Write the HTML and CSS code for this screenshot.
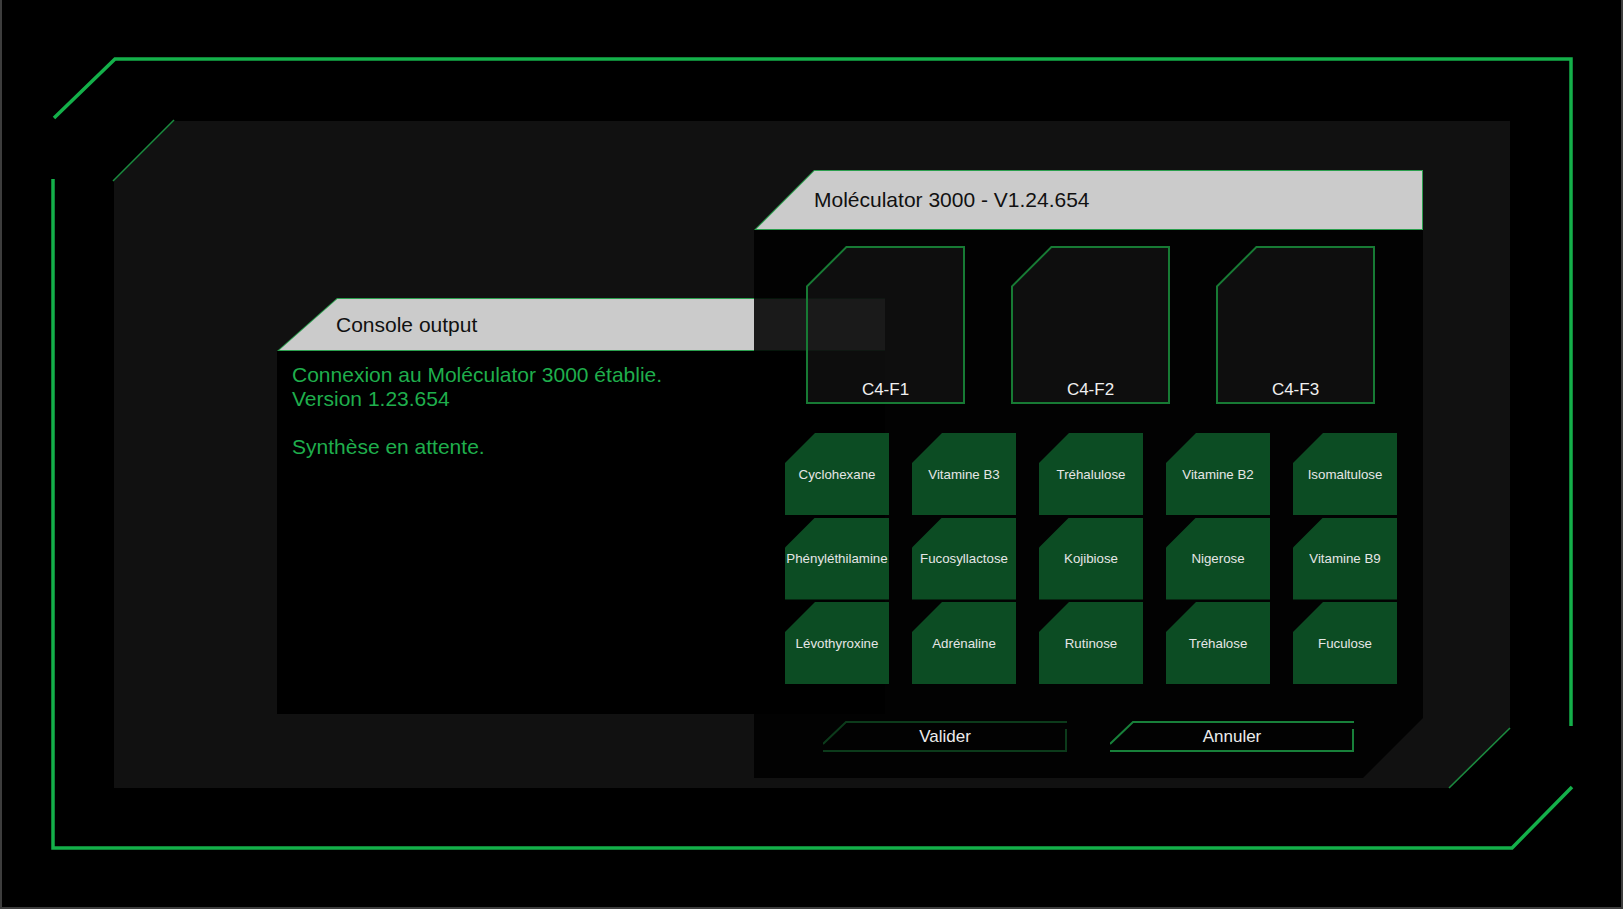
FILE: index.html
```html
<!DOCTYPE html>
<html lang="fr">
<head>
    <meta charset="UTF-8">
    <meta name="viewport" content="width=device-width, initial-scale=1.0">
    <title>Moléculator 3000</title>
    <link rel="stylesheet" href="styles.css">
</head>
<body>
    <div class="screen">
        <main class="panel">
            <section class="console">
                <div class="console-head">
                    <div class="console-head-fill">Console output</div>
                </div>
                <div class="console-body">
                    <p>Connexion au Moléculator 3000 établie.<br>Version 1.23.654</p>
                    <p>Synthèse en attente.</p>
                </div>
            </section>

            <section class="synth">
                <div class="synth-head">
                    <div class="synth-head-fill">Moléculator 3000 - V1.24.654</div>
                </div>
                <div class="synth-body">
                    <div class="flasks">
                        <div class="flask"><div class="flask-fill">C4-F1</div></div>
                        <div class="flask"><div class="flask-fill">C4-F2</div></div>
                        <div class="flask"><div class="flask-fill">C4-F3</div></div>
                    </div>

                    <div class="molecules">
                        <div class="tile">Cyclohexane</div>
                        <div class="tile">Vitamine B3</div>
                        <div class="tile">Tréhalulose</div>
                        <div class="tile">Vitamine B2</div>
                        <div class="tile">Isomaltulose</div>
                        <div class="tile">Phényléthilamine</div>
                        <div class="tile">Fucosyllactose</div>
                        <div class="tile">Kojibiose</div>
                        <div class="tile">Nigerose</div>
                        <div class="tile">Vitamine B9</div>
                        <div class="tile">Lévothyroxine</div>
                        <div class="tile">Adrénaline</div>
                        <div class="tile">Rutinose</div>
                        <div class="tile">Tréhalose</div>
                        <div class="tile">Fuculose</div>
                    </div>

                    <div class="actions">
                        <button class="btn btn-dim">
                            <svg class="btn-outline" width="244" height="31" viewBox="0 0 244 31">
                                <path d="M0 23 L23 1 L244 1 M243 8 L243 31 M0 30 L244 30"/>
                            </svg>
                            <span>Valider</span>
                        </button>
                        <button class="btn">
                            <svg class="btn-outline" width="244" height="31" viewBox="0 0 244 31">
                                <path d="M0 23 L23 1 L244 1 M243 8 L243 31 M0 30 L244 30"/>
                            </svg>
                            <span>Annuler</span>
                        </button>
                    </div>
                </div>
            </section>
        </main>

        <!-- decorative frame lines drawn over the page -->
        <svg class="frame" width="1623" height="909" viewBox="0 0 1623 909">
            <polyline class="frame-line" points="54,118 115,59 1571,59 1571,726"/>
            <polyline class="frame-line" points="53,179 53,848 1512,848 1572,787"/>
            <line class="panel-edge" x1="113" y1="181" x2="174" y2="120"/>
            <line class="panel-edge" x1="1510" y1="728" x2="1449" y2="788"/>
        </svg>
    </div>
</body>
</html>
```

FILE: styles.css
```css
html, body {
    margin: 0;
    padding: 0;
    background-color: #000;
}

body {
    font-family: "Liberation Sans", Arial, sans-serif;
}

.screen {
    position: relative;
    width: 1623px;
    height: 909px;
    box-sizing: border-box;
    padding: 121px 0 0 114px;
    background-color: #000;
    box-shadow: inset 2px 0 #3d3d3d, inset -2px 0 #3d3d3d, inset 0 -2px #3d3d3d;
    overflow: hidden;
}

.frame {
    position: absolute;
    top: 0;
    left: 0;
    pointer-events: none;
}

.frame-line {
    fill: none;
    stroke: #14b04a;
    stroke-width: 3.5;
}

.panel-edge {
    stroke: #1b8a3f;
    stroke-width: 1.6;
}

/* inner dark panel */
.panel {
    display: flex;
    align-items: flex-start;
    width: 1396px;
    height: 667px;
    box-sizing: border-box;
    padding: 49px 0 0 163px;
    background-color: #111;
    clip-path: polygon(60px 0, 100% 0, 100% calc(100% - 60px), calc(100% - 61px) 100%, 0 100%, 0 60px);
}

/* console */
.console {
    width: 608px;
    margin-top: 128px;
    flex-shrink: 0;
}

.console-head {
    height: 53px;
    box-sizing: border-box;
    padding: 1px 0;
    background-color: #2b9f4e;
    clip-path: polygon(60px 0, 100% 0, 100% 100%, 0 100%);
}

.console-head-fill {
    height: 51px;
    line-height: 51px;
    padding-left: 59px;
    background-color: #cbcbcb;
    color: #111;
    font-size: 21px;
    clip-path: polygon(60.3px 0, 100% 0, 100% 100%, 2.5px 100%);
}

.console-body {
    height: 363px;
    box-sizing: border-box;
    padding: 12px 0 0 15px;
    background-color: #000;
    color: #1fae4c;
    font-size: 21px;
    line-height: 24px;
}

.console-body p {
    margin: 0 0 24px;
}

/* molecule synthesizer */
.synth {
    width: 669px;
    margin-left: -131px;
    flex-shrink: 0;
}

.synth-head {
    height: 60px;
    box-sizing: border-box;
    padding: 1px;
    background-color: #2b9f4e;
    clip-path: polygon(60px 0, 100% 0, 100% 100%, 0 100%);
}

.synth-head-fill {
    height: 58px;
    line-height: 58px;
    padding-left: 59px;
    background-color: #cbcbcb;
    color: #111;
    font-size: 21px;
    clip-path: polygon(59.4px 0, 100% 0, 100% 100%, 1.4px 100%);
}

.synth-body {
    height: 548px;
    box-sizing: border-box;
    padding-top: 16px;
    background-color: rgba(0, 0, 0, 0.87);
    clip-path: polygon(0 0, 100% 0, 100% calc(100% - 60px), calc(100% - 60px) 100%, 0 100%);
}

.flasks {
    display: flex;
    gap: 46px;
    margin-left: 52px;
}

.flask {
    position: relative;
    width: 159px;
    height: 158px;
}

/* green outline of the flask shape, drawn over the see-through fill */
.flask::after {
    content: "";
    position: absolute;
    inset: 0;
    background-color: #177a34;
    clip-path: polygon(40px 0, 100% 0, 100% 100%, 0 100%, 0 40px,
        2px 40.8px, 2px calc(100% - 2px), calc(100% - 2px) calc(100% - 2px),
        calc(100% - 2px) 2px, 40.8px 2px, 2px 40.8px, 0 40px);
}

.flask-fill {
    display: flex;
    align-items: flex-end;
    justify-content: center;
    height: 100%;
    box-sizing: border-box;
    padding-bottom: 4px;
    background-color: rgba(26, 26, 26, 0.5);
    color: #f0f0f0;
    font-size: 17px;
    clip-path: polygon(40px 0, 100% 0, 100% 100%, 0 100%, 0 40px);
}

.molecules {
    display: grid;
    grid-template-columns: repeat(5, 104px);
    grid-auto-rows: 82px;
    column-gap: 23px;
    row-gap: 2.5px;
    margin: 29px 0 0 31px;
}

.tile {
    display: flex;
    align-items: center;
    justify-content: center;
    background-color: #0c4c23;
    color: #e6e6e6;
    font-size: 13.3px;
    white-space: nowrap;
    clip-path: polygon(30px 0, 100% 0, 100% 100%, 0 100%, 0 30px);
}

.actions {
    display: flex;
    gap: 43px;
    margin: 37px 0 0 69px;
}

.btn {
    position: relative;
    width: 244px;
    height: 31px;
    padding: 0;
    border: none;
    background: transparent;
    color: #ececec;
    font-family: inherit;
    font-size: 17px;
    line-height: 31px;
}

.btn-outline {
    position: absolute;
    top: 0;
    left: 0;
}

.btn-outline path {
    fill: none;
    stroke: #18803a;
    stroke-width: 2;
}

.btn-dim .btn-outline path {
    stroke: #0c3b1b;
}

.btn span {
    position: relative;
}
```
